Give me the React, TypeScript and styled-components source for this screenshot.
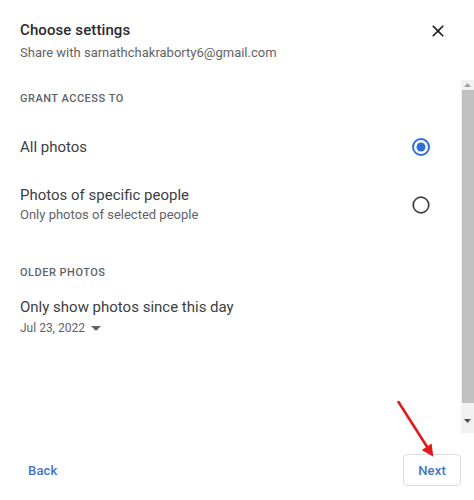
import React from "react";
import styled, { createGlobalStyle } from "styled-components";

const Global = createGlobalStyle`
  html, body { margin: 0; padding: 0; background: #ffffff; }
  body { font-family: Roboto, "Noto Sans", Arial, sans-serif; }
  * { box-sizing: border-box; }
`;

const Dialog = styled.div`
  position: relative;
  width: 474px;
  height: 500px;
  display: flex;
  flex-direction: column;
  background: #ffffff;
  overflow: hidden;
`;

const Header = styled.header`
  height: 80px;
  display: flex;
  justify-content: space-between;
  align-items: flex-start;
  padding: 20px 26px 0 20px;
`;

const Titles = styled.div`
  display: flex;
  flex-direction: column;
`;

const Title = styled.h1`
  margin: 0;
  font-size: 15px;
  line-height: 20px;
  font-weight: 500;
  color: #2a2b2e;
  letter-spacing: 0.1px;
`;

const Subtitle = styled.div`
  margin-top: 3px;
  font-size: 13px;
  line-height: 20px;
  color: #5f6368;
`;

const CloseButton = styled.button`
  border: 0;
  padding: 0;
  margin-top: 1px;
  background: transparent;
  width: 20px;
  height: 20px;
  display: flex;
  color: #202124;
`;

const Body = styled.div`
  height: 353px;
  display: flex;
`;

const Content = styled.div`
  flex: 1;
  padding: 11px 30px 0 20px;
  display: flex;
  flex-direction: column;
`;

const SectionLabel = styled.div<{ $top: number }>`
  margin-top: ${(p) => p.$top}px;
  font-size: 11px;
  line-height: 16px;
  font-weight: 500;
  letter-spacing: 0.5px;
  color: #5f6368;
  text-transform: uppercase;
`;

const OptionRow = styled.div<{ $first?: boolean }>`
  display: flex;
  align-items: center;
  justify-content: space-between;
  padding: 14px 0;
  margin-top: ${(p) => (p.$first ? 16 : 0)}px;
`;

const OptionText = styled.div`
  display: flex;
  flex-direction: column;
`;

const Primary = styled.div`
  font-size: 15px;
  line-height: 20px;
  color: #3c4043;
`;

const Secondary = styled.div`
  font-size: 13px;
  line-height: 20px;
  color: #5f6368;
`;

const Radio = styled.span`
  width: 20px;
  height: 20px;
  display: flex;
  align-items: center;
  justify-content: center;
`;

const DateBlock = styled.div`
  margin-top: 16px;
  display: flex;
  flex-direction: column;
`;

const DatePicker = styled.div`
  margin-top: 3px;
  display: flex;
  align-items: center;
  gap: 6px;
  font-size: 12px;
  line-height: 16px;
  color: #5f6368;
`;

const Scrollbar = styled.div`
  width: 13px;
  display: flex;
  flex-direction: column;
  background: #f1f1f1;
`;

const ScrollButton = styled.div<{ $h: number; $align: string }>`
  height: ${(p) => p.$h}px;
  display: flex;
  justify-content: center;
  align-items: ${(p) => p.$align};
`;

const Thumb = styled.div`
  height: 313px;
  margin: 0 0 0 1px;
  background: #c1c1c1;
`;

const Spacer = styled.div`
  flex: 1;
`;

const Footer = styled.footer`
  flex: 1;
  display: flex;
  justify-content: space-between;
  align-items: flex-start;
  padding: 21px 13px 0 13px;
`;

const TextButton = styled.button<{ $outlined?: boolean }>`
  height: 32px;
  padding: 0 14px;
  border: 1px solid ${(p) => (p.$outlined ? "#dadce0" : "transparent")};
  border-radius: 4px;
  background: #ffffff;
  font-family: Roboto, Arial, sans-serif;
  font-size: 13px;
  line-height: 31px;
  font-weight: 500;
  color: #4274c4;
  letter-spacing: 0.2px;
`;

const Annotation = styled.svg`
  position: absolute;
  left: 0;
  top: 0;
  pointer-events: none;
`;

function RadioIcon({ checked }: { checked?: boolean }) {
  return (
    <Radio>
      <svg width="20" height="20" viewBox="0 0 20 20">
        {checked ? (
          <>
            <circle cx="10" cy="10" r="8" fill="none" stroke="#2f6fd6" strokeWidth="2" />
            <circle cx="10" cy="10" r="4.5" fill="#2f6fd6" />
          </>
        ) : (
          <circle cx="10" cy="10" r="7.8" fill="none" stroke="#3c4043" strokeWidth="1.7" />
        )}
      </svg>
    </Radio>
  );
}

export default function App() {
  return (
    <>
      <Global />
      <Dialog>
        <Header>
          <Titles>
            <Title>Choose settings</Title>
            <Subtitle>Share with sarnathchakraborty6@gmail.com</Subtitle>
          </Titles>
          <CloseButton aria-label="Close">
            <svg width="20" height="20" viewBox="0 0 24 24">
              <path
                d="M19 6.41 17.59 5 12 10.59 6.41 5 5 6.41 10.59 12 5 17.59 6.41 19 12 13.41 17.59 19 19 17.59 13.41 12z"
                fill="currentColor"
              />
            </svg>
          </CloseButton>
        </Header>

        <Body>
          <Content>
            <SectionLabel $top={0}>Grant access to</SectionLabel>
            <OptionRow $first>
              <OptionText>
                <Primary>All photos</Primary>
              </OptionText>
              <RadioIcon checked />
            </OptionRow>
            <OptionRow>
              <OptionText>
                <Primary>Photos of specific people</Primary>
                <Secondary>Only photos of selected people</Secondary>
              </OptionText>
              <RadioIcon />
            </OptionRow>

            <SectionLabel $top={26}>Older photos</SectionLabel>
            <DateBlock>
              <Primary>Only show photos since this day</Primary>
              <DatePicker>
                <span>Jul 23, 2022</span>
                <svg width="10" height="5" viewBox="0 0 10 5">
                  <path d="M0 0h10L5 5z" fill="#5f6368" />
                </svg>
              </DatePicker>
            </DateBlock>
          </Content>

          <Scrollbar>
            <ScrollButton $h={10} $align="center">
              <svg width="7" height="4" viewBox="0 0 7 4">
                <path d="M0 4h7L3.5 0z" fill="#a3a3a3" />
              </svg>
            </ScrollButton>
            <Thumb />
            <Spacer />
            <ScrollButton $h={14} $align="flex-start">
              <svg width="7" height="4" viewBox="0 0 7 4">
                <path d="M0 0h7L3.5 4z" fill="#505050" />
              </svg>
            </ScrollButton>
          </Scrollbar>
        </Body>

        <Footer>
          <TextButton>Back</TextButton>
          <TextButton $outlined>Next</TextButton>
        </Footer>

        <Annotation width="474" height="500" viewBox="0 0 474 500">
          <line x1="398.5" y1="402" x2="427.5" y2="447.5" stroke="#e01b1b" strokeWidth="2.6" strokeLinecap="round" />
          <path d="M433.3 456.7 L421.8 449.9 L431.6 443.6 Z" fill="#e01b1b" />
        </Annotation>
      </Dialog>
    </>
  );
}
